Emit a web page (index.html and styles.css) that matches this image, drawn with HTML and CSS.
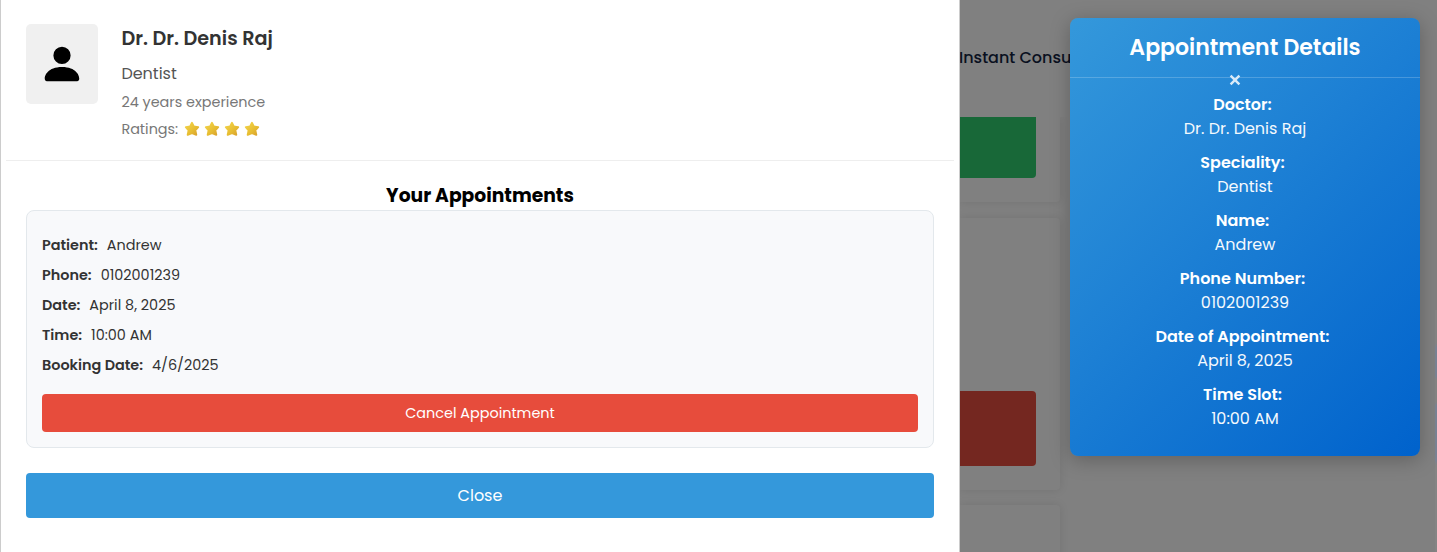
FILE: index.html
```html
<!DOCTYPE html>
<html lang="en">
<head>
<meta charset="utf-8">
<title>Your Appointments</title>
<link rel="stylesheet" href="styles.css">
</head>
<body>
<svg class="defs" width="0" height="0">
  <defs>
    <linearGradient id="gold" x1="0" y1="0" x2="1" y2="1"><stop offset="0" stop-color="#f3d44c"/><stop offset=".55" stop-color="#e8bf33"/><stop offset="1" stop-color="#d9a22e"/></linearGradient>
    <symbol id="star" viewBox="0 0 16 16"><path d="M8 1.8 9.8 5.5 14.2 6.1 11.3 9.3 12.3 13.8 8 12.2 3.7 13.8 4.6 9.3 1.8 6.1 6.1 5.5Z" fill="url(#gold)" stroke="url(#gold)" stroke-width="1.9" stroke-linejoin="round"/></symbol>
  </defs>
</svg>
<div class="screen">
  <main class="modal">
    <header class="doctor">
      <div class="photo">
        <svg width="46" height="46" viewBox="0 0 16 16"><path d="M3 14s-1 0-1-1 1-4 6-4 6 3 6 4-1 1-1 1zm5-6a3 3 0 1 0 0-6 3 3 0 0 0 0 6"/></svg>
      </div>
      <div class="info">
        <h2 class="name">Dr. Dr. Denis Raj</h2>
        <p class="job">Dentist</p>
        <p class="exp">24 years experience</p>
        <p class="rating"><span>Ratings:</span><svg class="star"><use href="#star"/></svg><svg class="star"><use href="#star"/></svg><svg class="star"><use href="#star"/></svg><svg class="star"><use href="#star"/></svg></p>
      </div>
    </header>
    <section class="content">
      <h3 class="heading">Your Appointments</h3>
      <div class="card">
        <p class="row"><strong>Patient:</strong><span>Andrew</span></p>
        <p class="row"><strong>Phone:</strong><span>0102001239</span></p>
        <p class="row"><strong>Date:</strong><span>April 8, 2025</span></p>
        <p class="row"><strong>Time:</strong><span>10:00 AM</span></p>
        <p class="row"><strong>Booking Date:</strong><span>4/6/2025</span></p>
        <button class="btn cancel">Cancel Appointment</button>
      </div>
      <button class="btn close">Close</button>
    </section>
  </main>
  <div class="page">
    <nav class="nav">Instant Consultation</nav>
    <div class="tiles">
      <div class="tile first"><div class="block green"></div></div>
      <div class="tile second"><div class="block red"></div></div>
      <div class="tile third"></div>
    </div>
  </div>
  <div class="edge"></div>
  <aside class="details">
    <h2 class="title">Appointment Details</h2>
    <div class="x"><svg width="12" height="12" viewBox="0 0 12 12"><path d="M1.6 1.6 10.4 10.4M10.4 1.6 1.6 10.4"/></svg></div>
    <dl class="list">
      <dt>Doctor:</dt><dd>Dr. Dr. Denis Raj</dd>
      <dt>Speciality:</dt><dd>Dentist</dd>
      <dt>Name:</dt><dd>Andrew</dd>
      <dt>Phone Number:</dt><dd>0102001239</dd>
      <dt>Date of Appointment:</dt><dd>April 8, 2025</dd>
      <dt>Time Slot:</dt><dd>10:00 AM</dd>
    </dl>
  </aside>
</div>
</body>
</html>
```
FILE: styles.css
```css
* { box-sizing: border-box; margin: 0; padding: 0; }
body { font-family: Poppins, Inter, "Open Sans", sans-serif; background: #808080; overflow: hidden; }
.defs { position: absolute; }
.screen { display: flex; width: 1437px; height: 552px; position: relative; overflow: hidden; }

.modal { width: 960px; height: 552px; flex: none; background: #fff; border: solid #ccc; border-width: 0 1px; padding: 0 5px; position: relative; z-index: 1; }
.doctor { display: flex; gap: 23.4px; height: 161px; padding: 24px 20px 0; border-bottom: 1px solid #eee; }
.photo { width: 72px; height: 80px; border-radius: 5px; background: #f0f0f0; display: flex; align-items: center; justify-content: center; flex: none; }
.info { white-space: nowrap; }
.name { font-size: 19.2px; line-height: 29px; font-weight: 600; color: #333; }
.job { font-size: 16px; line-height: 24px; margin-top: 9px; color: #555; }
.exp { font-size: 14.4px; line-height: 22px; margin-top: 5px; color: #777; }
.rating { display: flex; align-items: center; gap: 4px; font-size: 14.4px; line-height: 22px; margin-top: 5px; color: #777; }
.rating span { width: 58.6px; }
.star { width: 16px; height: 16px; }
.content { padding: 20px; }
.heading { font-size: 18.72px; line-height: 29px; font-weight: 700; text-align: center; color: #000; }
.card { background: #f8f9fb; border: 1px solid #e3e8ec; border-radius: 8px; height: 238px; padding: 19px 15px 15px; }
.row { display: flex; gap: 9px; font-size: 14.4px; line-height: 30px; color: #333; white-space: nowrap; }
.row strong { font-weight: 600; }
.btn { display: block; width: 100%; border: 0; border-radius: 4px; color: #fff; font-family: inherit; }
.cancel { height: 38px; margin-top: 14px; background: #e74c3c; font-size: 14.4px; }
.close { height: 45px; margin-top: 25px; background: #3498db; font-size: 16px; }

.page { flex: 1; display: flex; flex-direction: column; overflow: hidden; }
.nav { height: 117px; flex: none; line-height: 115px; font-size: 16px; font-weight: 500; color: #0a1020; white-space: nowrap; text-indent: -1px; }
.tiles { width: 477px; flex: 1; overflow: hidden; }
.tile { width: 100px; border-radius: 0 4px 4px 0; box-shadow: 0 0 10px rgba(0, 0, 0, .1); background: #808080; }
.first { height: 85px; border-top-right-radius: 0; }
.second { height: 272px; margin-top: 16px; padding-top: 173px; }
.third { height: 80px; margin-top: 15px; }
.block { width: 76px; }
.green { height: 61px; background: #186838; border-radius: 0 0 4px 0; }
.red { height: 75px; background: #742720; border-radius: 0 4px 4px 0; }
/* sliver of the scrollbar track behind the overlay */
.edge { position: absolute; right: 0; top: 310px; width: 2px; height: 242px; background: linear-gradient(#848484 33px, #7a8394 38px, #7a8394 66px, #848484 70px, #848484 92px, #7a8394 96px, #7a8394 150px, #848484 155px); }

.details { position: absolute; left: 1070px; top: 18px; width: 350px; height: 438px; border-radius: 8px; background: linear-gradient(135deg, #3498db, #0062cc); box-shadow: 0 4px 20px rgba(0, 0, 0, .25); color: #fff; text-align: center; white-space: nowrap; z-index: 2; }
.title { height: 60px; line-height: 60px; font-size: 22.05px; font-weight: 600; border-bottom: 1px solid rgba(255, 255, 255, .2); }
.x { height: 14px; margin-top: -4px; padding-right: 20px; line-height: 0; }
.x path { stroke: #d9eaf8; stroke-width: 2.4; fill: none; }
.list { font-size: 16px; line-height: 24px; padding-top: 5px; }
.list dt { font-weight: 600; padding-right: 5px; }
.list dd { color: #f4f9fd; margin-bottom: 10px; }
```
